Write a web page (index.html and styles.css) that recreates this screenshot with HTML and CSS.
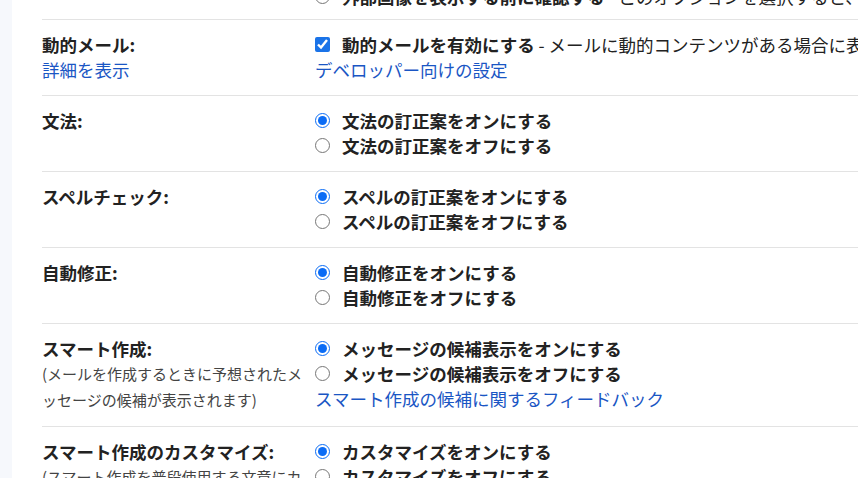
FILE: index.html
```html
<!DOCTYPE html>
<html lang="ja">
<head>
<meta charset="utf-8">
<title>設定</title>
<link rel="stylesheet" href="styles.css">
</head>
<body>
<div class="page">
  <aside class="rail"></aside>
  <main class="settings">
    <section class="row row--prev">
      <div class="label"><div class="label-title">画像:</div></div>
      <div class="value">
        <label class="opt"><input type="radio" name="img"><span><b>外部画像を常に表示する</b></span></label>
        <label class="opt"><input type="radio" name="img"><span><b>外部画像を表示する前に確認する</b> - このオプションを選択すると、動的メールも無効になります。</span></label>
      </div>
    </section>

    <section class="row">
      <div class="label">
        <div class="label-title">動的メール:</div>
        <a class="link" href="#">詳細を表示</a>
      </div>
      <div class="value">
        <label class="opt"><input type="checkbox" checked><span><b>動的メールを有効にする</b> - メールに動的コンテンツがある場合に表示します。</span></label>
        <a class="link" href="#">デベロッパー向けの設定</a>
      </div>
    </section>

    <section class="row">
      <div class="label"><div class="label-title">文法:</div></div>
      <div class="value">
        <label class="opt"><input type="radio" name="gr" checked><span><b>文法の訂正案をオンにする</b></span></label>
        <label class="opt"><input type="radio" name="gr"><span><b>文法の訂正案をオフにする</b></span></label>
      </div>
    </section>

    <section class="row">
      <div class="label"><div class="label-title">スペルチェック:</div></div>
      <div class="value">
        <label class="opt"><input type="radio" name="sp" checked><span><b>スペルの訂正案をオンにする</b></span></label>
        <label class="opt"><input type="radio" name="sp"><span><b>スペルの訂正案をオフにする</b></span></label>
      </div>
    </section>

    <section class="row">
      <div class="label"><div class="label-title">自動修正:</div></div>
      <div class="value">
        <label class="opt"><input type="radio" name="ac" checked><span><b>自動修正をオンにする</b></span></label>
        <label class="opt"><input type="radio" name="ac"><span><b>自動修正をオフにする</b></span></label>
      </div>
    </section>

    <section class="row">
      <div class="label">
        <div class="label-title">スマート作成:</div>
        <div class="label-note">(メールを作成するときに予想されたメッセージの候補が表示されます)</div>
      </div>
      <div class="value">
        <label class="opt"><input type="radio" name="sc" checked><span><b>メッセージの候補表示をオンにする</b></span></label>
        <label class="opt"><input type="radio" name="sc"><span><b>メッセージの候補表示をオフにする</b></span></label>
        <a class="link" href="#">スマート作成の候補に関するフィードバック</a>
      </div>
    </section>

    <section class="row">
      <div class="label">
        <div class="label-title">スマート作成のカスタマイズ:</div>
        <div class="label-note">(スマート作成を普段使用する文章にカスタマイズします)</div>
      </div>
      <div class="value">
        <label class="opt"><input type="radio" name="cu" checked><span><b>カスタマイズをオンにする</b></span></label>
        <label class="opt"><input type="radio" name="cu"><span><b>カスタマイズをオフにする</b></span></label>
      </div>
    </section>
  </main>
</div>
</body>
</html>
```

FILE: styles.css
```css
html, body {
  margin: 0;
  height: 100%;
  overflow: hidden;
  background: #ffffff;
}

body {
  font-family: "Noto Sans CJK JP", "Noto Sans", sans-serif;
  font-size: 17.5px;
  line-height: 25px;
  color: #222222;
}

.page {
  display: flex;
  min-height: 100vh;
}

.rail {
  flex: none;
  width: 12px;
  background: #f6f8fc;
}

.settings {
  flex: 1;
  min-width: 0;
  padding-left: 30px;
  margin-top: -54px;
  overflow: hidden;
}

.row {
  display: grid;
  grid-template-columns: 273px 1fr;
  border-top: 1px solid #e3e3e3;
  padding: 12px 0 13px;
}

.row--prev {
  padding-bottom: 10px;
}

.label {
  display: flex;
  flex-direction: column;
  align-items: flex-start;
  padding-right: 8px;
}

.label-title {
  font-weight: 700;
}

.label-note {
  font-size: 15px;
  line-height: 26px;
  color: #444444;
}

.value {
  display: flex;
  flex-direction: column;
  align-items: flex-start;
  min-width: 0;
}

.opt {
  display: flex;
  align-items: center;
  white-space: nowrap;
}

.opt input {
  flex: none;
  width: 15px;
  height: 15px;
  margin: 0 12px 0 0;
  accent-color: #0b6cf5;
}

.opt input[type="checkbox"] {
  accent-color: #1a73e8;
}

.opt b {
  font-weight: 700;
}

.link {
  color: #1a56c4;
  text-decoration: none;
  white-space: nowrap;
}
```
